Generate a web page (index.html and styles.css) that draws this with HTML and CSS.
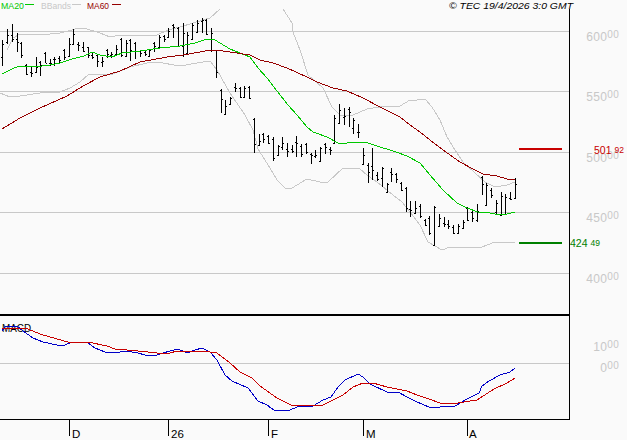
FILE: index.html
```html
<!DOCTYPE html>
<html lang="en">
<head>
<meta charset="utf-8">
<title>TEC chart</title>
<link rel="stylesheet" href="styles.css">
</head>
<body>
<svg class="chart" width="627" height="440" viewBox="0 0 627 440" xmlns="http://www.w3.org/2000/svg">
  <g class="grid">
    <path d="M0 31.5H569M0 91.5H569M0 152.5H569M0 212.5H569M0 273.5H569M0 363.5H569"/>
  </g>
  <g class="legend">
    <text class="lg-green" x="1" y="8.6" textLength="23" lengthAdjust="spacingAndGlyphs">MA20</text>
    <path class="s-lgreen" d="M25 4.5H34"/>
    <text class="lg-gray" x="41" y="8.6" textLength="30" lengthAdjust="spacingAndGlyphs">BBands</text>
    <path class="s-band" d="M72 4.5H81"/>
    <text class="lg-red" x="87" y="8.6" textLength="22" lengthAdjust="spacingAndGlyphs">MA60</text>
    <path class="s-lred" d="M112 4.5H121"/>
  </g>
  <text class="stamp" x="449" y="8.6" textLength="124" lengthAdjust="spacingAndGlyphs">© TEC 19/4/2026 3:0 GMT</text>

  <polyline class="s-band" points="7,50 13,38 20,34 40,35 60,33 72,30 78,28 87,29 100,33 110,37 120,35 143,36 157,35 168,30 180,27 193,23 210,18 220,9"/>
  <polyline class="s-band" points="283,9 292,23 293,32 300,50 308,75 323,88 332,107 340,115 353,115 367,109 380,107 400,106 410,100 417,100 425,99 432,107 440,120 447,137 455,150 463,162 475,173 485,182 495,187 507,185 515,182"/>
  <polyline class="s-band" points="0,93 10,97 20,96 40,93 60,92 70,88 80,82 88,75 113,74 130,67 147,63 157,62 180,66 197,63 210,61 217,70 230,93 245,115 253,130 258,149 270,168 277,180 285,188 292,188 307,179 320,182 328,182 343,168 360,169 367,175 377,182 393,195 402,202 410,212 420,225 428,242 442,250 450,247 467,248 482,247 495,242 515,243"/>

  <g id="bars" class="bars"></g>

  <polyline class="s-ma20" points="2,74 8,71 14,68 20,66 28,66 42,66 50,65 60,63 72,59 84,56 92,52 100,55 112,57 122,53 140,51 160,48 180,46 195,43 207,39 215,40 220,43 230,49 240,53 250,57 258,68 267,78 277,91 288,105 297,115 307,127 313,132 327,137 338,143 347,143 353,142 365,142 377,146 393,151 407,156 420,163 430,175 443,190 457,203 467,208 478,212 490,213 500,215 507,214 515,212"/>
  <polyline class="s-ma60" points="2,129 20,118 40,108 67,96 83,86 100,77 120,71 140,62 167,57 183,55 200,52 210,50 223,51 250,55 260,60 273,63 287,68 307,77 317,82 333,88 347,91 363,98 380,107 400,117 410,125 420,132 430,140 443,150 460,162 473,169 483,174 497,176 507,179 515,180"/>

  <path class="level-r" d="M519 149H562"/>
  <path class="level-g" d="M519 243H562"/>

  <text class="macd-lbl" x="2" y="332" textLength="29" lengthAdjust="spacingAndGlyphs">MACD</text>
  <polyline class="s-macd" points="2,331 5,327 17,326 23,331 33,338 43,342 57,345 65,345 72,342 88,343 95,348 105,352 120,352 125,351 138,353 145,355 157,355 163,353 170,351 178,349 187,353 195,350 202,348 210,352 217,360 225,375 232,381 248,388 258,401 267,405 275,411 290,410 297,407 313,406 323,400 331,397 338,387 345,380 358,374 363,377 370,384 387,392 398,392 407,397 417,402 429,407 440,407 455,406 467,399 479,393 482,386 489,381 500,375 510,372 515,368"/>
  <polyline class="s-signal" points="2,328 28,329 40,334 57,339 68,342 88,342 107,346 115,349 138,351 157,353 170,353 177,351 187,352 203,351 210,352 217,353 230,363 240,372 252,378 260,386 277,398 293,406 323,405 343,395 353,387 363,383 373,383 387,387 407,391 417,395 429,399 440,403 452,404 464,402 477,400 494,389 507,383 515,378"/>

  <path class="frame" d="M569.5 9V419.5M0 419.5H570M69.5 419V436M168.5 419V436M268.5 419V436M363.5 419V436M467.5 419V436"/>
  <path class="frame-thick" d="M0 315H570"/>

  <g class="months">
    <text x="72" y="438">D</text>
    <text x="171" y="438">26</text>
    <text x="271" y="438">F</text>
    <text x="366" y="438">M</text>
    <text x="469" y="438">A</text>
  </g>

  <g class="axis">
    <text x="619" y="41" text-anchor="end">600<tspan class="cents" dy="-3">00</tspan></text>
    <text x="619" y="101" text-anchor="end">550<tspan class="cents" dy="-3">00</tspan></text>
    <text x="619" y="162" text-anchor="end">500<tspan class="cents" dy="-3">00</tspan></text>
    <text x="619" y="222" text-anchor="end">450<tspan class="cents" dy="-3">00</tspan></text>
    <text x="619" y="283" text-anchor="end">400<tspan class="cents" dy="-3">00</tspan></text>
    <text x="619" y="351" text-anchor="end">10<tspan class="cents" dy="-3">00</tspan></text>
    <text x="619" y="372" text-anchor="end">0<tspan class="cents" dy="-3">00</tspan></text>
  </g>
  <text class="val-r" x="594" y="154">501<tspan class="cents-s" dx="3" dy="-1">92</tspan></text>
  <text class="val-g" x="570" y="247">424<tspan class="cents-s" dx="3" dy="-1">49</tspan></text>
</svg>
<script src="script.js"></script>
</body>
</html>
```
FILE: styles.css
```css
html, body {
  margin: 0;
  padding: 0;
  background: #fafafa;
}
.chart {
  display: block;
  font-family: "Liberation Sans", Arial, sans-serif;
}
.chart polyline, .chart path {
  fill: none;
  shape-rendering: crispEdges;
}
.grid path { stroke: #c8c8c8; stroke-width: 1; }
.legend text { font-size: 9.5px; }
.lg-green { fill: #00c800; }
.lg-gray { fill: #c8c8c8; }
.lg-red { fill: #960000; }
.s-lgreen { stroke: #00c800; stroke-width: 1; }
.s-lred { stroke: #960000; stroke-width: 1; }
.s-band { stroke: #c8c8c8; stroke-width: 1; }
.s-ma20 { stroke: #00c800; stroke-width: 1; }
.s-ma60 { stroke: #960000; stroke-width: 1; }
.s-macd { stroke: #0000c8; stroke-width: 1; }
.s-signal { stroke: #c80000; stroke-width: 1; }
.bars path { stroke: #000; stroke-width: 1; }
.level-r { stroke: #c80000; stroke-width: 2; }
.level-g { stroke: #008000; stroke-width: 2; }
.frame { stroke: #000; stroke-width: 1; }
.frame-thick { stroke: #000; stroke-width: 2; }
.stamp { font-size: 9.5px; font-style: italic; fill: #000; }
.macd-lbl { font-size: 10px; fill: #000; }
.months text { font-size: 11.5px; fill: #000; }
.axis text { font-size: 12px; letter-spacing: 0.3px; fill: #c8c8c8; }
.cents { font-size: 10px; }
.cents-s { font-size: 8.5px; }
.val-r { font-size: 10.5px; fill: #c80000; }
.val-g { font-size: 10.5px; fill: #008000; }
```
FILE: script.js
```js
// OHLC bars: [high, low, open, close] in chart pixels
var bars = [
  [40,66,57,44],[29,44,42,35],[24,42,35,39],[33,52,39,42],[42,58,43,55],
  [64,75,65,74],[67,77,72,73],[57,73,72,67],[61,76,62,65],[52,63,53,63],
  [59,66,63,63],[57,66,59,59],[56,63,58,60],[49,60,50,57],[38,57,56,44],
  [29,45,44,34],[42,51,44,45],[42,52,47,51],[47,58,47,55],[52,59,55,57],
  [55,67,55,61],[57,67,62,61],[49,58,50,54],[52,58,55,54],[45,55,54,49],
  [38,57,39,55],[40,57,56,43],[39,61,40,50],[42,59,43,51],[50,57,51,53],
  [50,56,52,54],[49,57,56,50],[42,52,43,46],[35,48,47,37],[35,42,36,39],
  [28,38,37,31],[24,38,25,27],[27,47,28,46],[23,57,46,33],[32,55,53,35],
  [23,40,39,25],[20,33,32,23],[18,33,21,20],[19,35,20,34],
  [28,52,50,33],[50,78,50,72],
  [89,113,90,99],[100,115,114,106],[97,105,104,98],[83,92,87,88],[87,98,88,97],
  [86,98,97,88],[86,99,87,98],
  [118,153,119,144],[134,146,145,141],[133,143,134,139],[135,144,136,143],[137,161,139,158],
  [145,156,155,146],[137,150,147,143],[143,157,149,151],[145,153,149,151],[136,157,142,143],
  [144,157,146,154],[143,154,144,152],[153,164,154,155],[150,158,156,155],[147,162,161,148],
  [143,154,144,147],[147,155,149,150],[115,144,143,118],
  [104,124,123,110],[108,125,117,116],[107,127,109,112],[118,134,128,120],[124,138,132,132],
  [148,165,164,155],[163,183,165,172],[148,180,166,170],[172,181,175,179],[167,187,178,168],
  [183,193,192,184],[168,182,172,174],[173,183,174,179],[182,191,183,190],
  [187,212,188,208],[201,217,209,210],[201,214,213,208],[204,218,206,216],
  [219,226,220,225],[216,235,218,233],[206,246,245,207],[214,227,226,218],[217,227,223,224],
  [220,229,224,226],[225,234,227,233],[224,234,233,226],[220,229,228,222],[207,221,208,220],
  [209,222,212,218],[204,222,220,211],
  [176,195,177,184],[183,206,205,185],[188,198,190,195],[200,214,212,203],[192,216,215,196],
  [194,215,214,197],[192,200,198,199],[178,199,198,184]
];
var d = bars.map(function (b, i) {
  var x = Math.round(2.3 + 4.745 * i) + 0.5;
  return "M" + x + " " + b[0] + "V" + b[1] +
    "M" + (x - 1.5) + " " + (b[2] + 0.5) + "H" + x +
    "M" + x + " " + (b[3] + 0.5) + "H" + (x + 1.5);
}).join("");
var path = document.createElementNS("http://www.w3.org/2000/svg", "path");
path.setAttribute("d", d);
document.getElementById("bars").appendChild(path);
```
